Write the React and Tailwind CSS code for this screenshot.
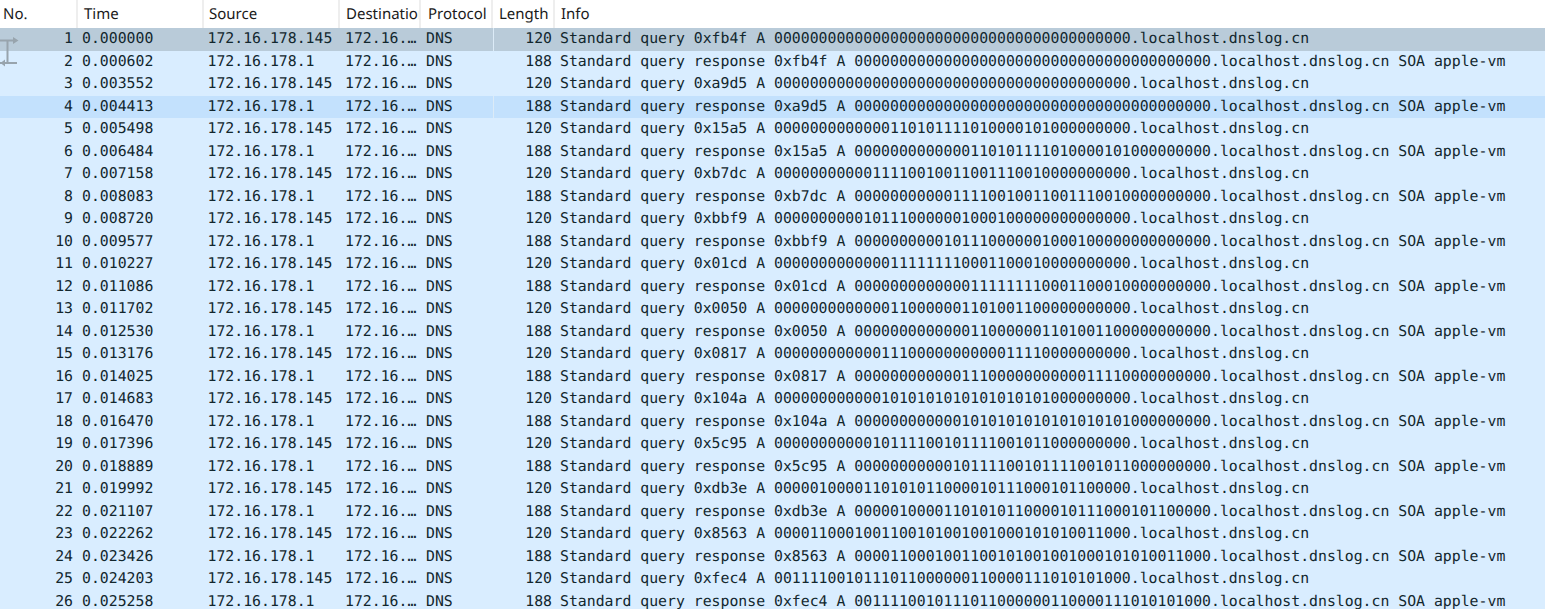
const columns = [
  { label: "No.", width: "w-[78px]", pad: "pl-[3px]" },
  { label: "Time", width: "w-[126px]", pad: "pl-[6px]" },
  { label: "Source", width: "w-[136px]", pad: "pl-[5px]" },
  { label: "Destination", width: "w-[81px]", pad: "pl-[6px]" },
  { label: "Protocol", width: "w-[72px]", pad: "pl-[7px]" },
  { label: "Length", width: "w-[62px]", pad: "pl-[6px]" },
  { label: "Info", width: "flex-1", pad: "pl-[6px]" },
];

const queries = [
  ["0.000000", "0.000602", "0xfb4f", "0000000000000000000000000000000000000000"],
  ["0.003552", "0.004413", "0xa9d5", "0000000000000000000000000000000000000000"],
  ["0.005498", "0.006484", "0x15a5", "0000000000000110101111010000101000000000"],
  ["0.007158", "0.008083", "0xb7dc", "0000000000011110010011001110010000000000"],
  ["0.008720", "0.009577", "0xbbf9", "0000000000101110000001000100000000000000"],
  ["0.010227", "0.011086", "0x01cd", "0000000000000111111110001100010000000000"],
  ["0.011702", "0.012530", "0x0050", "0000000000000110000001101001100000000000"],
  ["0.013176", "0.014025", "0x0817", "0000000000001110000000000011110000000000"],
  ["0.014683", "0.016470", "0x104a", "0000000000001010101010101010101000000000"],
  ["0.017396", "0.018889", "0x5c95", "0000000000010111100101111001011000000000"],
  ["0.019992", "0.021107", "0xdb3e", "0000010000110101011000010111000101100000"],
  ["0.022262", "0.023426", "0x8563", "0000110001001100101001001000101010011000"],
  ["0.024203", "0.025258", "0xfec4", "0011110010111011000000110000111010101000"],
];

// each query is followed by its response
const packets = queries.flatMap(([t1, t2, id, bits], i) => [
  {
    no: i * 2 + 1,
    time: t1,
    source: "172.16.178.145",
    length: 120,
    info: `Standard query ${id} A ${bits}.localhost.dnslog.cn`,
  },
  {
    no: i * 2 + 2,
    time: t2,
    source: "172.16.178.1",
    length: 188,
    info: `Standard query response ${id} A ${bits}.localhost.dnslog.cn SOA apple-vm`,
  },
]);

const rowColor = (no) => {
  if (no === 1) return "bg-[#b9cbd9]";
  if (no === 4) return "bg-[#c3e1fd]";
  return "bg-[#d9edff]";
};

const RelatedArrows = () => (
  <svg className="absolute left-0 top-[28px]" width="22" height="46" viewBox="0 0 22 46" fill="none">
    <path d="M0 12.5H14M7.5 12.5V35M0 35H17" stroke="#98a4ad" strokeWidth="2" />
    <path d="M18.5 12.5L13 9V16Z" fill="#98a4ad" />
    <path d="M0.5 35L5 31.5V38.5Z" fill="#98a4ad" />
  </svg>
);

export default function App() {
  return (
    <div className="relative h-[609px] overflow-hidden bg-white font-['DejaVu_Sans_Mono',monospace] text-[14.82px] text-[#12272e] [text-rendering:geometricPrecision]">
      {/* Header */}
      <div className="flex h-[28px] bg-white font-['Noto_Sans',sans-serif] text-[15px] text-[#1a1a1a]">
        {columns.map((col) => (
          <div
            key={col.label}
            className={`${col.width} ${col.pad} overflow-hidden whitespace-nowrap border-r-2 border-[#eeeeee] pt-[2px] leading-[24px] last:border-r-0`}
          >
            {col.label}
          </div>
        ))}
      </div>

      {/* Packet rows */}
      {packets.map((p) => (
        <div key={p.no} className={`flex h-[22.5px] whitespace-pre leading-[22px] ${rowColor(p.no)}`}>
          <div className="w-[73px] text-right">{p.no}</div>
          <div className="w-[134.5px] pl-[9px]">{p.time}</div>
          <div className="w-[137.5px]">{p.source}</div>
          <div className="w-[81px]">172.16.…</div>
          <div className="w-[67px]">DNS</div>
          <div className={`w-[62px] pr-[3px] text-right ${p.no === 1 || p.no === 4 ? "border-l border-[#dcebf7]" : ""}`}>
            {p.length}
          </div>
          <div className="flex-1 pl-[5px]">{p.info}</div>
        </div>
      ))}

      <RelatedArrows />
    </div>
  );
}
